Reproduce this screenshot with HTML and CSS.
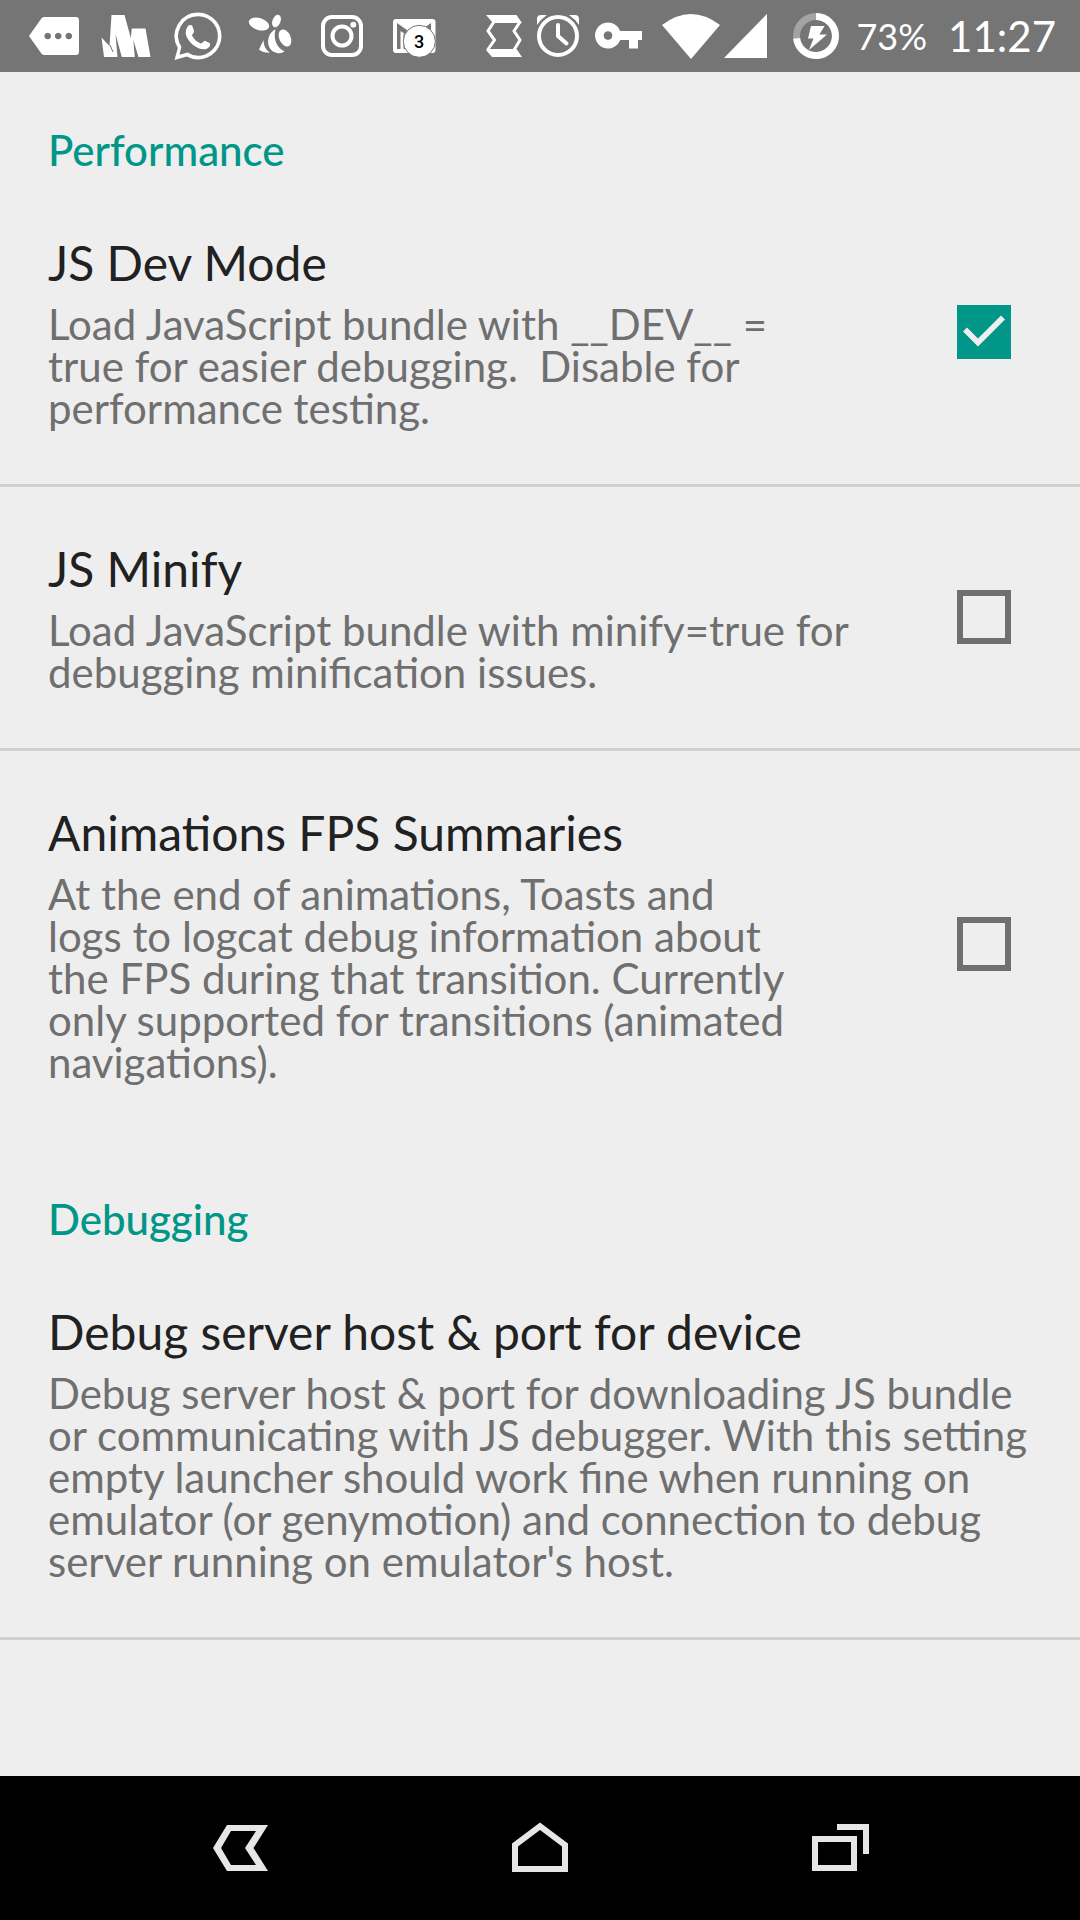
FILE: index.html
```html
<!DOCTYPE html>
<html lang="en">
<head>
<meta charset="utf-8">
<meta name="viewport" content="width=device-width, initial-scale=1">
<title>Dev Settings</title>
<link rel="stylesheet" href="styles.css">
</head>
<body>
<header class="status">
  <div class="status-group">
    <svg width="72" height="72" viewBox="0 0 72 72" aria-hidden="true"><path fill="#fff" fill-rule="evenodd" d="M26 17H58a3 3 0 0 1 3 3V52a3 3 0 0 1-3 3H26q-2 0-3-2L11 36 23 19q1-2 3-2zM29.700 32.700a3.300 3.300 0 1 0 .01 0zM40.200 32.700a3.300 3.300 0 1 0 .01 0zM50.800 32.700a3.300 3.300 0 1 0 .01 0z"/></svg>
    <svg width="72" height="72" viewBox="0 0 72 72" aria-hidden="true"><path fill="#fff" d="M11.500 37.500 19.500 46 21.500 15H34.500L40.800 38 41.800 28.500H55.500L60.500 57H48.500L43.300 40 44.800 57H31.800L25.500 34 27.500 57H14z"/><path d="M20 45 23 52" stroke="#757575" stroke-width="1"/></svg>
    <svg width="72" height="72" viewBox="162 0 72 72" aria-hidden="true"><path fill="#fff" fill-rule="evenodd" d="M198 12.500a23.500 23.500 0 1 1-11.300 44.100L174.500 60l3.300-12A23.500 23.500 0 0 1 198 12.500zM198 16.300a19.700 19.700 0 0 0-16.600 30.400L179.500 54.800 187.600 52.600A19.700 19.700 0 1 0 198 16.300z"/><path fill="#fff" d="M188.500 25.500c2-1 3.500-.5 4.200 1.500l1.300 4c.3 2-2 3-2 4.500 2 4 5 6.500 9 8 1.500 0 2.500-3 4-2.800l4.500 2.300c1 .6.700 2.500-.2 3.700-2.300 3-6.800 3.300-10.800 1.500-6-2.700-11-8.200-12.500-13.200-.7-3.500.5-8 2.500-9.500z"/></svg>
    <svg width="72" height="72" viewBox="0 0 72 72" aria-hidden="true"><g fill="#fff"><ellipse cx="25" cy="24" rx="10.500" ry="6" transform="rotate(18 25 24)"/><ellipse cx="42.500" cy="21" rx="4" ry="6.600" transform="rotate(22 42.500 21)"/><ellipse cx="51" cy="38" rx="5.700" ry="9" transform="rotate(-24 51 38)"/><path d="M41.500 29.500C32 33 31 50.500 43 53c3 .6 6-.2 7.500-1.800C42.500 48 39 38.500 41.500 29.500zM29.500 40C29.500 45.500 32 50 35.800 52.700 32 53 28 52 25 49.500z"/></g></svg>
    <svg width="72" height="72" viewBox="0 0 72 72" aria-hidden="true"><g fill="none" stroke="#fff" stroke-width="4"><rect x="17" y="17" width="38" height="38" rx="9"/><circle cx="36" cy="36" r="9.500"/></g><circle cx="47.300" cy="24.700" r="2.900" fill="#fff"/></svg>
    <svg width="72" height="72" viewBox="0 0 72 72" aria-hidden="true"><rect x="15" y="19" width="42.500" height="34" rx="3" fill="#fff"/><path fill="#757575" d="M19 23 36 35 53 23V30L36 40 22.500 31V49H19z"/><path fill="#757575" d="M25.500 33.500 34 39V49H25.500z"/><circle cx="41.300" cy="41.300" r="16" fill="#fff" stroke="#757575"/><text class="badge" x="41" y="48" text-anchor="middle">3</text></svg>
  </div>
  <div class="status-group">
    <svg width="50" height="72" viewBox="480 0 50 72" aria-hidden="true"><path fill="#fff" d="M486 15H516.500L522 23H493zM486 50 488 49H516.500L522 57H492z"/><path fill="none" stroke="#fff" stroke-width="3" d="M494.500 21 488 31 494.500 40 487.500 50M520 22 514 31 520 40 514 50"/></svg>
    <svg width="56" height="72" viewBox="530 0 56 72" aria-hidden="true"><circle cx="558" cy="36" r="19" fill="none" stroke="#fff" stroke-width="4"/><path fill="none" stroke="#fff" stroke-width="4" stroke-linecap="round" d="M558 25V36L566.500 43.500"/><path fill="#fff" d="M537 19V25Q541 19 547 15H541Q537 15 537 19zM579 19V25Q575 19 569 15H575Q579 15 579 19z"/></svg>
    <svg width="66" height="72" viewBox="586 0 66 72" aria-hidden="true"><path fill="#fff" fill-rule="evenodd" d="M620.200 31H642V40H638V48.500H629V40H620.200A13 13 0 1 1 620.200 31zM608 31.200a4.300 4.300 0 1 0 .01 0z"/></svg>
    <svg width="70" height="72" viewBox="652 0 70 72" aria-hidden="true"><path fill="#fff" d="M662 25Q691 3 720 25L691 59z"/></svg>
    <svg width="58" height="72" viewBox="722 0 58 72" aria-hidden="true"><path fill="#fff" d="M767 14V58H724z"/></svg>
    <svg width="72" height="72" viewBox="780 0 72 72" aria-hidden="true"><circle cx="816" cy="36" r="19.500" fill="none" stroke="#a3a3a3" stroke-width="7"/><path fill="none" stroke="#fff" stroke-width="7" d="M816 16.500A19.500 19.500 0 1 1 796.600 38.400"/><path fill="#fff" d="M811 26H824.500L819.500 34.500H827L809 50 813.500 38.500H808z"/></svg>
    <span class="battery">73%</span>
    <time class="clock">11:27</time>
  </div>
</header>

<main class="settings">
  <section>
    <h2 class="heading">Performance</h2>
    <label class="item">
      <span class="text">
        <span class="title">JS Dev Mode</span>
        <span class="summary">Load JavaScript bundle with __DEV__ =<br>true for easier debugging.&nbsp; Disable for<br>performance testing.</span>
      </span>
      <input class="check" type="checkbox" checked>
    </label>
    <label class="item">
      <span class="text">
        <span class="title">JS Minify</span>
        <span class="summary">Load JavaScript bundle with minify=true for<br>debugging minification issues.</span>
      </span>
      <input class="check" type="checkbox">
    </label>
    <label class="item item-last">
      <span class="text">
        <span class="title">Animations FPS Summaries</span>
        <span class="summary">At the end of animations, Toasts and<br>logs to logcat debug information about<br>the FPS during that transition. Currently<br>only supported for transitions (animated<br>navigations).</span>
      </span>
      <input class="check" type="checkbox">
    </label>
  </section>
  <section>
    <h2 class="heading">Debugging</h2>
    <button class="item item-wide" type="button">
      <span class="text">
        <span class="title">Debug server host &amp; port for device</span>
        <span class="summary">Debug server host &amp; port for downloading JS bundle<br>or communicating with JS debugger. With this setting<br>empty launcher should work fine when running on<br>emulator (or genymotion) and connection to debug<br>server running on emulator's host.</span>
      </span>
    </button>
  </section>
</main>

<nav class="navbar">
  <button type="button" aria-label="Back"><svg width="60" height="60" viewBox="0 0 60 60"><path fill="#e6e6e6" fill-rule="evenodd" d="M3 30 17 7H58L43.500 30 58 53H17zM11 30 21 47H46L35 30 46 13H21z"/></svg></button>
  <button type="button" aria-label="Home"><svg width="60" height="60" viewBox="0 0 60 60"><path fill="#e6e6e6" fill-rule="evenodd" d="M30 4.500 58 25.500V54H2V25.500zM30 12 8 28.500V48H52V28.500z"/></svg></button>
  <button type="button" aria-label="Recent apps"><svg width="60" height="60" viewBox="0 0 60 60"><path fill="#e6e6e6" fill-rule="evenodd" d="M2 18H47V53H2zM8 24V47H41V24zM27 6H59V36H53V12H27z"/></svg></button>
</nav>
</body>
</html>
```
FILE: styles.css
```css
* { box-sizing: border-box; }

body {
  margin: 0;
  min-height: 100vh;
  display: flex;
  flex-direction: column;
  background: #eee;
  color: #212121;
  font-family: Lato, Carlito, sans-serif;
}

button {
  border: 0;
  padding: 0;
  background: none;
  color: inherit;
  font: inherit;
  text-align: left;
}

svg { display: block; }

.status {
  display: flex;
  justify-content: space-between;
  height: 72px;
  padding: 0 24px 0 18px;
  background: #757575;
  color: #fff;
}

.status-group {
  display: flex;
  align-items: center;
}

.badge {
  font: 500 18px Roboto, sans-serif;
  fill: #000;
}

.battery {
  font-size: 36px;
  line-height: 44px;
  padding: 0 21px 0 4px;
}

.clock {
  font-size: 42px;
  line-height: 50px;
}

.settings { flex: 1; }

.heading {
  margin: 0;
  padding: 53px 48px 6px;
  color: #009688;
  font-size: 42px;
  font-weight: 500;
  line-height: 50px;
}

.item {
  display: flex;
  align-items: center;
  width: 100%;
  padding: 53px 69px 55px 48px;
  border-bottom: 3px solid #d0d0d0;
}

.item-last { border-color: transparent; }

.item-wide { padding-right: 32px; }

.text {
  flex: 1;
  display: flex;
  flex-direction: column;
  gap: 11px;
}

.title {
  font-size: 48px;
  line-height: 58px;
}

.summary {
  color: #6f6f6f;
  font-size: 42px;
  line-height: 42px;
}

.check {
  appearance: none;
  flex: none;
  width: 54px;
  height: 54px;
  margin: 0;
  border: 6px solid #6f6f6f;
}

.check:checked {
  border: 0;
  background: #009688;
}

.check:checked::before {
  content: "";
  display: block;
  height: 54px;
  background: #eee;
  clip-path: polygon(6px 27px, 10px 23px, 21px 34px, 44px 11px, 48px 15px, 21px 42px);
}

.navbar {
  display: flex;
  height: 144px;
  padding: 0 90px;
  background: #000;
}

.navbar button {
  flex: 1;
  display: flex;
  align-items: center;
  justify-content: center;
}
```
